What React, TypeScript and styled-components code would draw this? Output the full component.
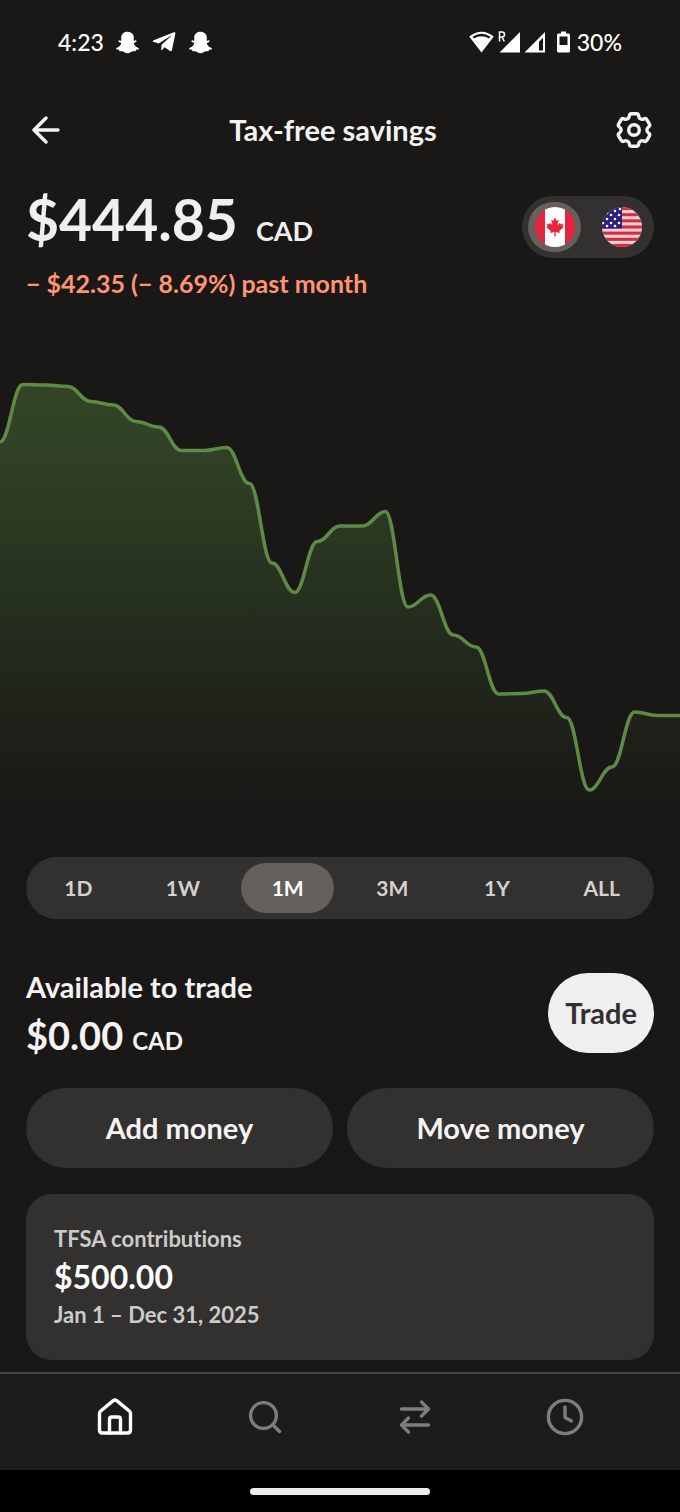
import React, { useState } from "react";
import styled, { createGlobalStyle } from "styled-components";
import { FaSnapchatGhost, FaTelegramPlane } from "react-icons/fa";

const GlobalStyle = createGlobalStyle`
  * { box-sizing: border-box; }
  body {
    margin: 0;
    background: #191816;
    color: #f4f3f2;
    font-family: Lato, "Liberation Sans", sans-serif;
    font-weight: 700;
    font-variant-ligatures: none;
  }
  button { font: inherit; color: inherit; border: 0; padding: 0; background: none; cursor: pointer; }
  h1, h2, p { margin: 0; font-size: inherit; font-weight: inherit; }
  svg { display: block; }
`;

const Screen = styled.div`
  min-height: 100vh;
  display: flex;
  flex-direction: column;
`;

const StatusBar = styled.div`
  height: 86px;
  padding: 0 58px 2px;
  display: flex;
  align-items: center;
  justify-content: space-between;
  color: #ffffff;
  font-size: 23px;
  line-height: 28px;
  font-weight: 500;
`;

const StatusGroup = styled.div<{ $gap: number }>`
  display: flex;
  align-items: center;
  gap: ${(p) => p.$gap}px;
`;

const Header = styled.header`
  height: 88px;
  padding: 0 26px;
  display: grid;
  grid-template-columns: 40px 1fr 54px;
  align-items: center;
`;

const Title = styled.h1`
  text-align: center;
  font-size: 29px;
  line-height: 36px;
`;

const IconButton = styled.button`
  width: 40px;
  height: 40px;
  display: grid;
  place-items: center;

  &:last-child { justify-self: end; }
`;

const Main = styled.main`
  flex: 1;
  padding: 13px 0 12px;
`;

const Gutter = styled.div`
  padding: 0 26px;
`;

const BalanceRow = styled.section`
  display: flex;
  justify-content: space-between;
  align-items: flex-start;
`;

const Balance = styled.p`
  display: flex;
  align-items: baseline;
  gap: 18px;
  font-size: 57px;
  line-height: 64px;
  color: #f0efef;
`;

const Unit = styled.span<{ $size: number }>`
  font-size: ${(p) => p.$size}px;
  line-height: 1;
`;

const Change = styled.p`
  margin-top: 16px;
  font-size: 25px;
  line-height: 32px;
  color: #ff9473;
`;

const CurrencySwitch = styled.div`
  margin-top: 9px;
  height: 62px;
  padding: 6px;
  display: flex;
  gap: 14px;
  border-radius: 31px;
  background: #32312f;
`;

const CurrencyButton = styled.button<{ $active: boolean }>`
  width: 53px;
  height: 50px;
  display: grid;
  place-items: center;
  border-radius: 25px;
  background: ${(p) => (p.$active ? "#64605c" : "transparent")};
`;

const ChartBox = styled.figure`
  margin: 71px 0 47px;
  height: 440px;
  svg { width: 100%; height: 100%; }
`;

const RangeBar = styled.div`
  height: 62px;
  padding: 6px;
  display: grid;
  grid-template-columns: repeat(6, 1fr);
  gap: 12px;
  border-radius: 31px;
  background: #32312f;
`;

const RangeButton = styled.button<{ $active: boolean }>`
  border-radius: 25px;
  font-size: 21px;
  line-height: 28px;
  background: ${(p) => (p.$active ? "#64605c" : "transparent")};
  color: ${(p) => (p.$active ? "#ffffff" : "#d2d1cf")};
`;

const TradeRow = styled.section`
  margin-top: 50px;
  display: flex;
  align-items: center;
  justify-content: space-between;
`;

const TradeLabel = styled.h2`
  margin-bottom: 8px;
  font-size: 29px;
  line-height: 36px;
`;

const Available = styled.p`
  display: flex;
  align-items: baseline;
  gap: 9px;
  font-size: 38px;
  line-height: 44px;
`;

const PillButton = styled.button<{ $light?: boolean }>`
  height: 80px;
  padding: 0 17px;
  border-radius: 40px;
  font-size: 29px;
  line-height: 36px;
  background: ${(p) => (p.$light ? "#efefef" : "#32312f")};
  color: ${(p) => (p.$light ? "#32302f" : "#f4f3f2")};
`;

const Actions = styled.div`
  margin: 31px 0 26px;
  display: grid;
  grid-template-columns: 1fr 1fr;
  gap: 14px;
`;

const Card = styled.section`
  padding: 31px 28px;
  display: flex;
  flex-direction: column;
  gap: 4px;
  border-radius: 26px;
  background: #32312f;
`;

const CardNote = styled.p`
  font-size: 22px;
  line-height: 28px;
  color: #cccbc9;
`;

const CardValue = styled.p`
  font-size: 32px;
  line-height: 40px;
  color: #ffffff;
`;

const NavBar = styled.nav`
  height: 98px;
  padding: 0 40px 10px;
  display: grid;
  grid-template-columns: repeat(4, 1fr);
  border-top: 2px solid #494642;
  background: #1c1c1c;
`;

const NavButton = styled.button<{ $active?: boolean }>`
  display: grid;
  place-items: center;
  color: ${(p) => (p.$active ? "#ffffff" : "#807d79")};
`;

const GestureArea = styled.div`
  height: 42px;
  display: grid;
  place-items: center;
  background: #000000;
`;

const GestureHandle = styled.div`
  width: 180px;
  height: 7px;
  border-radius: 4px;
  background: #ececec;
`;

/* ---------- status icons ---------- */

const WifiIcon = () => (
  <svg width="25" height="22" viewBox="0 0 25 22" fill="currentColor" aria-hidden="true">
    <path
      fillRule="evenodd"
      d="M0.2 5.4Q12.500-4 24.800 5.400L12.500 21.500ZM3.600 5.700L5 7.600Q12.500 2.800 20 7.600L21.400 5.700Q12.500-0.400 3.600 5.700Z"
    />
  </svg>
);

const SignalIcons = () => (
  <svg width="48" height="22" viewBox="0 0 48 22" fill="currentColor" aria-hidden="true">
    <path d="M22 1V21.500H1.500Z" />
    <path fillRule="evenodd" d="M47 1V21.500H26.500ZM45 6.800L41 10.800V19.500H45Z" />
    <path d="M1.500 10.500V1H4A2.500 2.500 0 0 1 4 6H1.500M4 6L6.300 10.500" fill="none" stroke="currentColor" strokeWidth="1.500" />
  </svg>
);

const BatteryIcon = () => (
  <svg width="13" height="22" viewBox="0 0 13 22" fill="currentColor" aria-hidden="true">
    <path
      fillRule="evenodd"
      d="M4 0.500H9V2.500H11.500Q13 2.500 13 4V20Q13 21.500 11.500 21.500H1.500Q0 21.500 0 20V4Q0 2.500 1.500 2.500H4ZM2.500 5.500V14H10.500V5.500Z"
    />
  </svg>
);

/* ---------- interface icons ---------- */

const Stroke = ({ w, h, children }: { w: number; h: number; children: React.ReactNode }) => (
  <svg
    width={w}
    height={h}
    viewBox={`0 0 ${w} ${h}`}
    fill="none"
    stroke="currentColor"
    strokeWidth={3.4}
    strokeLinecap="round"
    strokeLinejoin="round"
    aria-hidden="true"
  >
    {children}
  </svg>
);

type Point = [number, number];

/* Closed six-tooth outline, every corner eased by `ease` pixels. */
function gearPath(c: number, ease: number) {
  const corners: Point[] = [];
  for (let k = 0; k < 6; k++) {
    [[-22, 13], [-15, 16.9], [15, 16.9], [22, 13]].forEach(([offset, r]) => {
      const a = ((k * 60 - 90 + offset) * Math.PI) / 180;
      corners.push([c + r * Math.cos(a), c + r * Math.sin(a)]);
    });
  }
  const toward = (p: Point, q: Point): Point => {
    const d = Math.hypot(q[0] - p[0], q[1] - p[1]);
    const t = Math.min(ease, d / 2) / d;
    return [p[0] + (q[0] - p[0]) * t, p[1] + (q[1] - p[1]) * t];
  };
  const n = corners.length;
  return (
    corners
      .map((p, i) => {
        const a = toward(p, corners[(i + n - 1) % n]);
        const b = toward(p, corners[(i + 1) % n]);
        return `${i ? "L" : "M"}${a.join(" ")}Q${p.join(" ")} ${b.join(" ")}`;
      })
      .join("") + "Z"
  );
}

const Maple = () => (
  <path
    fill="#e4253c"
    stroke="#e4253c"
    strokeWidth="120"
    transform="translate(20 20) scale(0.0045)"
    d="m-90 2030 45-863a95 95 0 0 0-111-98l-859 151 116-320a65 65 0 0 0-20-73l-941-762 212-99a65 65 0 0 0 34-79l-186-572 542 115a65 65 0 0 0 73-38l105-247 423 454a65 65 0 0 0 111-57l-204-1052 327 189a65 65 0 0 0 91-27l332-652 332 652a65 65 0 0 0 91 27l327-189-204 1052a65 65 0 0 0 111 57l423-454 105 247a65 65 0 0 0 73 38l542-115-186 572a65 65 0 0 0 34 79l212 99-941 762a65 65 0 0 0-20 73l116 320-859-151a95 95 0 0 0-111 98l45 863z"
  />
);

const CanadaFlag = () => (
  <svg width="40" height="40" viewBox="0 0 40 40" aria-hidden="true">
    <clipPath id="flag-ca"><circle cx="20" cy="20" r="20" /></clipPath>
    <g clipPath="url(#flag-ca)">
      <rect width="40" height="40" fill="#e4253c" />
      <rect x="10" width="20" height="40" fill="#ffffff" />
      <Maple />
    </g>
  </svg>
);

const stars: Point[] = [
  [13, 4], [17, 8], [9, 8], [5, 12], [13, 12], [17, 16], [9, 16], [1, 16], [5, 19], [13, 19], [18, 2], [5, 6],
];

const UsaFlag = () => (
  <svg width="40" height="40" viewBox="0 0 40 40" aria-hidden="true">
    <clipPath id="flag-us"><circle cx="20" cy="20" r="20" /></clipPath>
    <g clipPath="url(#flag-us)">
      <rect width="40" height="40" fill="#d9d7d8" />
      {[0, 1, 2, 3, 4, 5, 6].map((i) => (
        <rect key={i} y={(i * 80) / 13} width="40" height={40 / 13} fill="#e4253c" />
      ))}
      <rect width="20" height="21.500" fill="#28227c" />
      {stars.map(([x, y]) => (
        <circle key={`${x}-${y}`} cx={x} cy={y} r="1.300" fill="#ffffff" />
      ))}
    </g>
  </svg>
);

/* ---------- chart ---------- */

const CHART_W = 680;
const CHART_H = 440;
const values = [
  72, 14.5, 15, 16.5, 31.5, 35, 51.5, 57, 80.5, 80.5, 77.5, 113.5, 193, 222.5, 171.5, 156, 156, 141.5, 237,
  225, 265, 277, 324, 323.5, 321, 347.5, 420, 397, 342, 345.5, 345.5,
];

/* Eased steps: the line is level at every sample. */
function curve(ys: number[]) {
  const h = CHART_W / (ys.length - 1);
  const reach = h * 0.42;
  return ys
    .map((y, i) => (i === 0 ? `M0 ${y}` : `C${(i - 1) * h + reach} ${ys[i - 1]} ${i * h - reach} ${y} ${i * h} ${y}`))
    .join("");
}

const Chart = () => {
  const line = curve(values);
  return (
    <ChartBox>
      <svg viewBox={`0 0 ${CHART_W} ${CHART_H}`} preserveAspectRatio="none" role="img" aria-label="Account value, past month">
        <defs>
          <linearGradient id="area" gradientUnits="userSpaceOnUse" x1="0" y1="14" x2="0" y2="435">
            <stop offset="0" stopColor="#507c39" stopOpacity="0.450" />
            <stop offset="0.120" stopColor="#507c39" stopOpacity="0.430" />
            <stop offset="1" stopColor="#507c39" stopOpacity="0" />
          </linearGradient>
        </defs>
        <path d={`${line}V${CHART_H}H0Z`} fill="url(#area)" />
        <path d={line} fill="none" stroke="#5f8a46" strokeWidth="3.500" vectorEffect="non-scaling-stroke" />
      </svg>
    </ChartBox>
  );
};

const ranges = ["1D", "1W", "1M", "3M", "1Y", "ALL"];

export default function App() {
  const [range, setRange] = useState("1M");
  const [currency, setCurrency] = useState("CAD");

  return (
    <Screen>
      <GlobalStyle />
      <StatusBar>
        <StatusGroup $gap={12}>
          <span>4:23</span>
          <FaSnapchatGhost size={23} />
          <FaTelegramPlane size={26} />
          <FaSnapchatGhost size={23} />
        </StatusGroup>
        <StatusGroup $gap={11}>
          <StatusGroup $gap={4}>
            <WifiIcon />
            <SignalIcons />
          </StatusGroup>
          <StatusGroup $gap={7}>
            <BatteryIcon />
            <span>30%</span>
          </StatusGroup>
        </StatusGroup>
      </StatusBar>

      <Header>
        <IconButton aria-label="Back">
          <Stroke w={28} h={28}>
            <path d="M26 14H2M14 2L2 14L14 26" />
          </Stroke>
        </IconButton>
        <Title>Tax-free savings</Title>
        <IconButton aria-label="Settings">
          <Stroke w={38} h={38}>
            <path d={gearPath(19, 2)} />
            <circle cx="19" cy="19" r="5.300" />
          </Stroke>
        </IconButton>
      </Header>

      <Main>
        <Gutter>
          <BalanceRow>
            <div>
              <Balance>
                $444.85 <Unit $size={27}>CAD</Unit>
              </Balance>
              <Change>− $42.35 (− 8.69%) past month</Change>
            </div>
            <CurrencySwitch role="group" aria-label="Currency">
              <CurrencyButton
                $active={currency === "CAD"}
                aria-pressed={currency === "CAD"}
                aria-label="Canadian dollar"
                onClick={() => setCurrency("CAD")}
              >
                <CanadaFlag />
              </CurrencyButton>
              <CurrencyButton
                $active={currency === "USD"}
                aria-pressed={currency === "USD"}
                aria-label="US dollar"
                onClick={() => setCurrency("USD")}
              >
                <UsaFlag />
              </CurrencyButton>
            </CurrencySwitch>
          </BalanceRow>
        </Gutter>

        <Chart />

        <Gutter>
          <RangeBar role="group" aria-label="Time range">
            {ranges.map((r) => (
              <RangeButton key={r} $active={r === range} aria-pressed={r === range} onClick={() => setRange(r)}>
                {r}
              </RangeButton>
            ))}
          </RangeBar>

          <TradeRow>
            <div>
              <TradeLabel>Available to trade</TradeLabel>
              <Available>
                $0.00 <Unit $size={24}>CAD</Unit>
              </Available>
            </div>
            <PillButton $light>Trade</PillButton>
          </TradeRow>

          <Actions>
            <PillButton>Add money</PillButton>
            <PillButton>Move money</PillButton>
          </Actions>

          <Card>
            <CardNote>TFSA contributions</CardNote>
            <CardValue>$500.00</CardValue>
            <CardNote>Jan 1 – Dec 31, 2025</CardNote>
          </Card>
        </Gutter>
      </Main>

      <NavBar aria-label="Main">
        <NavButton $active aria-label="Home">
          <Stroke w={36} h={38}>
            <path d="M2.500 15.500Q2.500 14 3.700 13L16.300 2.600Q18 1.400 19.700 2.600L32.300 13Q33.500 14 33.500 15.500V32Q33.500 35 30.500 35H5.500Q2.500 35 2.500 32Z" />
            <path d="M12.500 35V21.500Q12.500 19 15 19H21Q23.500 19 23.500 21.500V35" />
          </Stroke>
        </NavButton>
        <NavButton aria-label="Search">
          <Stroke w={34} h={34}>
            <circle cx="15.500" cy="15.500" r="12.900" />
            <path d="M25 25L31.500 31.500" />
          </Stroke>
        </NavButton>
        <NavButton aria-label="Transfer">
          <Stroke w={34} h={36}>
            <path d="M3.500 10H30.500M23.500 3L30.500 10L23.500 17M30.500 26H3.500M10.500 19L3.500 26L10.500 33" />
          </Stroke>
        </NavButton>
        <NavButton aria-label="Activity">
          <Stroke w={38} h={38}>
            <circle cx="19" cy="19" r="16.600" />
            <path d="M19 9V19.500L25.500 23" />
          </Stroke>
        </NavButton>
      </NavBar>
      <GestureArea>
        <GestureHandle />
      </GestureArea>
    </Screen>
  );
}
